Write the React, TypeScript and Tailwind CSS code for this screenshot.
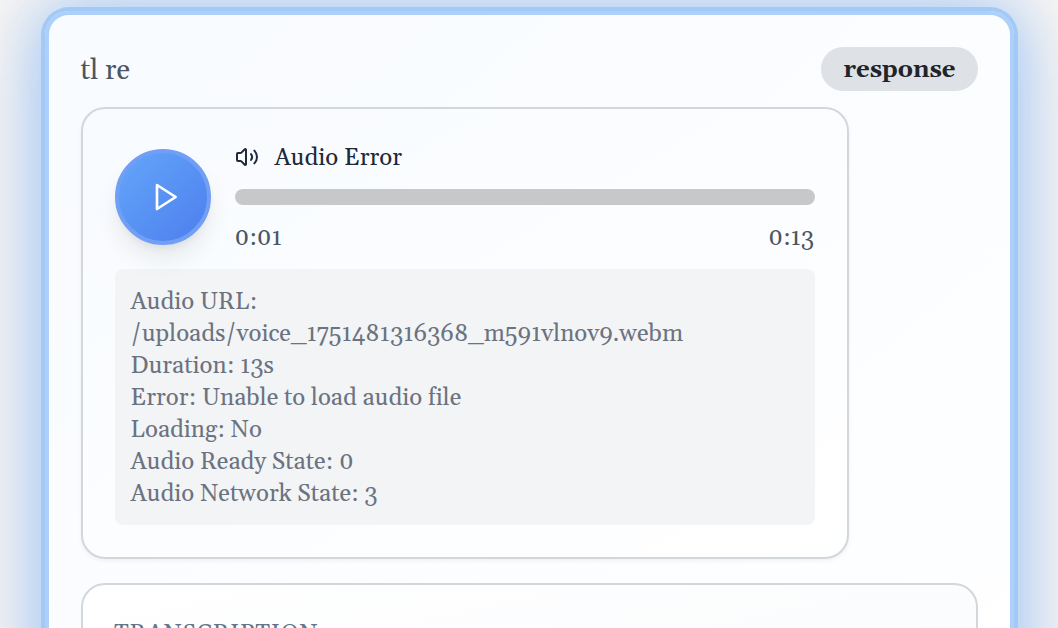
import { Volume2 } from "lucide-react";

const details = [
  "Audio URL:",
  "/uploads/voice_1751481316368_m591vlnov9.webm",
  "Duration: 13s",
  "Error: Unable to load audio file",
  "Loading: No",
  "Audio Ready State: 0",
  "Audio Network State: 3",
];

function PlayIcon() {
  return (
    <svg
      viewBox="0 0 24 24"
      className="size-8"
      fill="none"
      stroke="currentColor"
      strokeWidth="2"
      strokeLinecap="round"
      strokeLinejoin="round"
    >
      <polygon points="6 3 20 12 6 21" />
    </svg>
  );
}

function AudioPlayer() {
  return (
    <section className="w-[768px] rounded-[24px] border-2 border-[#d2d7dc] bg-gradient-to-br from-[#f8fbff] to-white p-8 shadow-[0_2px_4px_rgba(0,0,0,0.05)]">
      <div className="flex items-center gap-6">
        <button
          aria-label="Play"
          className="flex size-24 shrink-0 items-center justify-center rounded-full border-4 border-[#709ff5] bg-gradient-to-br from-[#64a6fa] to-[#4d7eed] pl-1 text-white shadow-[0_16px_28px_-4px_rgba(0,0,0,0.09),0_6px_10px_-4px_rgba(0,0,0,0.07)]"
        >
          <PlayIcon />
        </button>
        <div className="flex-1">
          <div className="flex h-8 items-center gap-4 text-[24px] leading-8 text-[#1e293b]">
            <Volume2 size={24} strokeWidth={2} />
            <span className="-ml-[0.5px] pt-px">Audio Error</span>
          </div>
          <div className="my-4 h-4 rounded-full bg-[#c7c8ca]" />
          <div className="flex h-8 justify-between pt-px text-[24px] leading-8 text-[#4b5563]">
            <span className="-ml-[0.5px]">0:01</span>
            <span className="mr-px">0:13</span>
          </div>
        </div>
      </div>
      <div className="mt-4 rounded-lg bg-[#f3f4f6] px-[15.5px] pt-[17px] pb-[15px] text-[24px] leading-8 text-[#6b7280] [font-variant-ligatures:none]">
        {details.map((line) => (
          <p key={line} className="whitespace-nowrap">
            {line}
          </p>
        ))}
      </div>
    </section>
  );
}

export default function App() {
  return (
    <main className="h-[628px] overflow-hidden bg-[#f7f5f3] pt-[11px] pr-11 pl-[45px] font-[Georgia,Gelasio,'Liberation_Serif',serif]">
      <article className="h-[800px] rounded-[24px] border-4 border-[#add0fb] bg-gradient-to-br from-[#f8fbff] to-white bg-origin-border p-8 shadow-[0_0_0_4px_#a3caf7,0_0_60px_8px_rgba(96,165,250,0.45),0_16px_80px_8px_rgba(90,150,235,0.22)]">
        <header className="mb-4 flex h-11 items-center justify-between">
          <h1 className="-ml-[0.5px] pt-1 text-[28px] text-[#4b5563]">tl re</h1>
          <span className="flex h-11 w-[157px] items-center justify-center rounded-full bg-[#dee1e6] pt-[2px] text-[24px] font-bold text-[#212529]">
            response
          </span>
        </header>
        <AudioPlayer />
        <section className="mt-6 h-[200px] rounded-[24px] border-2 border-[#d2d7dc] bg-gradient-to-br from-white to-[#f8fafc] px-[31px] pt-[33px] text-[24px] leading-8 tracking-[0.6px] text-[#64748b]">
          TRANSCRIPTION
        </section>
      </article>
    </main>
  );
}
